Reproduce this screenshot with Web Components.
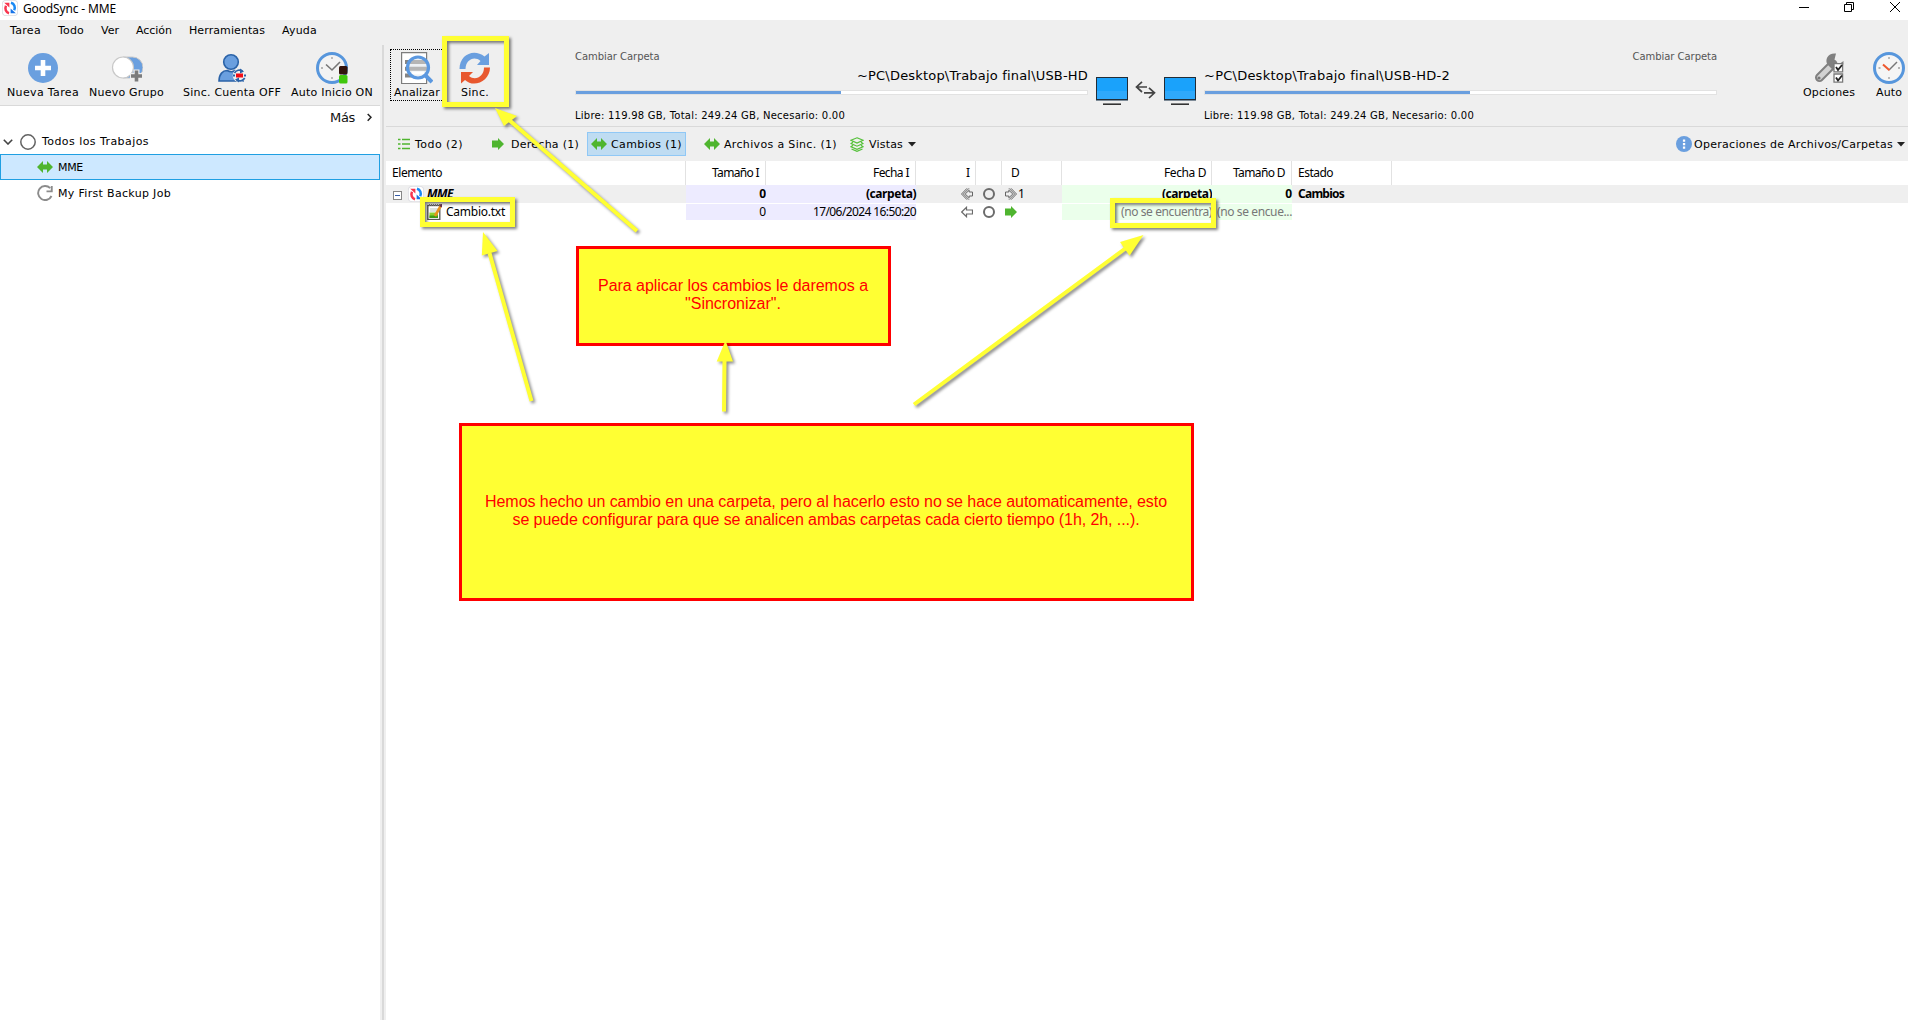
<!DOCTYPE html>
<html lang="es">
<head>
<meta charset="utf-8">
<title>GoodSync - MME</title>
<style>
html,body{margin:0;height:100%;overflow:hidden;background:#fff}
</style>
</head>
<body>
<gs-window></gs-window>
<script>
const UI = '"DejaVu Sans",sans-serif', SEG = '"Noto Sans","Open Sans",sans-serif';

function define(tag, css, html, init) {
  customElements.define(tag, class extends HTMLElement {
    constructor() {
      super();
      this.attachShadow({mode: 'open'});
      const t = document.createElement('template');
      const markup = typeof html === 'function' ? html(this) : html;
      t.innerHTML = '<style>' + css + '</style>' + markup;
      this.shadowRoot.append(t.content.cloneNode(true));
    }
    connectedCallback() { if (init) init(this); }
  });
}

const icons = {
  app: [16, 16, '<rect width="16" height="16" rx="4" fill="#dcdce2"/><rect x=".8" y=".8" width="14.400" height="14.400" rx="3.500" fill="#fff"/><path d="M7 13.200C3.800 12.200 2.600 8.800 4 5.800" fill="none" stroke="#f8354f" stroke-width="2.500"/><path d="M2.200 2.800h5.200v4.600z" fill="#f8354f"/><path d="M9 2.800c3.400 1 4.600 4.400 3.200 7.400" fill="none" stroke="#1889f4" stroke-width="2.500"/><path d="M13.800 13.200H8.600V8.600z" fill="#1673e8"/>'],
  plus: [32, 32, '<circle cx="16" cy="16" r="15" fill="#6a9fdf"/><path d="M16 8v16M8 16h16" stroke="#fff" stroke-width="4.600"/>'],
  group: [32, 32, '<path d="M12 5h9.500a9.500 9.500 0 0 1 0 21H12z" fill="#6a9fdf" stroke="#c9c9c9"/><circle cx="12" cy="15.500" r="10.500" fill="#fff" stroke="#c8c8c8" stroke-width="1.200"/><path d="M25.500 17.500v13M19 24h13" stroke="#efefef" stroke-width="6"/><path d="M25.500 18.500v11M20 24h11" stroke="#7c7c7c" stroke-width="3.600"/>'],
  user: [32, 32, '<circle cx="15" cy="10" r="7.300" fill="#6a9fdf" stroke="#2b63a8" stroke-width="1.600"/><path d="M3 29c0-7 4-10.500 8-10.500 3 1.500 6 1.500 8 0 4 1 7 4 8 10.500z" fill="#6a9fdf" stroke="#2b63a8" stroke-width="1.600"/><circle cx="23.500" cy="23.500" r="6.800" fill="#efefef"/><path d="M18.500 21a5.600 5.600 0 0 1 8-2M28.700 26a5.600 5.600 0 0 1-8 2" fill="none" stroke="#2b63a8" stroke-width="1.700"/><path d="M24 16.500l4 3-4 2zM23 30.500l-4-3 4-2zM17 22.500h2v2h-2zM28 22.500h2v2h-2z" fill="#2b63a8"/><rect x="20" y="21.500" width="7" height="4" fill="#f10d17"/>'],
  clockOn: [32, 32, '<circle cx="16" cy="16" r="14.500" fill="#f3f3f3" stroke="#5796dc" stroke-width="3"/><path d="M16 5v2M16 25v2M5 16h2M25 16h2" stroke="#b5b5b5" stroke-width="1.800"/><path d="M10 12.500l6 5.500 8-8" fill="none" stroke="#777" stroke-width="1.600"/><rect x="23" y="14" width="8.500" height="8.500" rx="1.500" fill="#32140d"/><rect x="23" y="23" width="8.500" height="8.500" rx="1.500" fill="#40c70c"/>'],
  clock: [32, 32, '<circle cx="16" cy="16" r="14.500" fill="#f5f5f5" stroke="#5796dc" stroke-width="3"/><path d="M16 5v2M16 25v2M5.500 16h2M25 16h2" stroke="#b5b5b5" stroke-width="1.800"/><path d="M16 18l8-8" stroke="#777" stroke-width="1.500"/><path d="M10 12.500l6.500 5.700" stroke="#ee582e" stroke-width="2"/>'],
  analyze: [32, 32, '<path d="M.600.600h25v31H.600z" fill="#fff" stroke="#7d7d7d" stroke-width="1.200"/><path d="M4 10h18M4 16.800h18M4 23.500h18" stroke="#858585" stroke-width="4"/><circle cx="17" cy="15.500" r="10.500" fill="#eef1f4"/><path d="M8 10h18M8 16.800h18" stroke="#b5b5b5" stroke-width="4"/><path d="M11 21h12" stroke="#fff" stroke-width="3"/><circle cx="17" cy="15.500" r="10.500" fill="none" stroke="#5b98e0" stroke-width="3.200"/><path d="M24 23l7 7" stroke="#5b98e0" stroke-width="4"/>'],
  sync: [32, 32, '<path d="M.500 17C.500 2.500 15-4 25.500 4.500L30 1v12H18l3.500-4C15 3.500 6.800 8 6.500 17z" fill="#6a9fdf"/><path d="M31 15.500C31 29 15 36.500 6 28L2 31.500V20h12l-4 4c6 5 15 1 15-8.500z" fill="#e8582f"/>'],
  tools: [32, 32, '<path d="M6.500 25.500L20 12" stroke="#808080" stroke-width="9" stroke-linecap="round"/><path d="M6.500 25.500L18 14" stroke="#d2d2d2" stroke-width="5" stroke-linecap="round"/><path d="M23 1.500c-8-1-11.500 6-8.500 11l5.500 5.500c6 2 11-2 10.500-9l-5 3.500-4.500-3z" fill="#808080"/><circle cx="6" cy="26" r="1.600" fill="#777"/><path d="M21 11.600h8.600v8.200H21zM21 22h8.600v8.200H21z" fill="#fff" stroke="#7a7a7a" stroke-width="1.300"/><path d="M23 15l2 3 4-5M23 25.500l2 3 4-5" fill="none" stroke="#222" stroke-width="1.800"/>'],
  both: [16, 12, '<path d="M0 6l6-6v3.500h4V0l6 6-6 6V8.500H6V12z" fill="#4fb52f"/>'],
  right: [12, 12, '<path d="M0 2.600h6V0l6 6-6 6V9.400H0z" fill="#4fb52f"/>'],
  list: [12, 12, '<path d="M0 1.500h2.500M0 6h2.500M0 10.500h2.500M4 1.500h8M4 6h8M4 10.500h8" stroke="#4fb52f" stroke-width="1.400"/>'],
  stack: [14, 15, '<g fill="none" stroke="#55c13a" stroke-width="1.200"><path d="M7 .8l6 2.500-6 2.800-6-2.800zM3 5L1 6.600l6 2.600 6-2.600L11 5M3 8.200L1 9.800l6 2.600 6-2.600-2-1.600M1.500 12L7 14.300 12.500 12"/></g>'],
  dots: [16, 16, '<circle cx="8" cy="8" r="8" fill="#6a9fdf"/><path d="M6.900 3.500h2.300v2.200H6.900zM6.900 7h2.300v2.200H6.900zM6.900 10.500h2.300v2.200H6.900z" fill="#fff"/>'],
  caret: [8, 5, '<path d="M0 0h8L4 4.500z" fill="#222"/>'],
  chevR: [5, 9, '<path d="M.700 1l3.300 3.300L.700 7.800" fill="none" stroke="#222" stroke-width="1.500"/>'],
  chevD: [10, 6, '<path d="M.800.800L5 5 9.200.800" fill="none" stroke="#444" stroke-width="1.600"/>'],
  ring: [16, 16, '<circle cx="8" cy="8" r="7.200" fill="#fff" stroke="#626262" stroke-width="1.500"/>'],
  redo: [16, 16, '<path d="M14.500 11A7 7 0 1 1 13.200 3.200" fill="none" stroke="#8c8c8c" stroke-width="1.900"/><path d="M15.700 1v6.200H9.500V5.500h4.300V1z" fill="#8c8c8c"/>'],
  monitor: [32, 28, '<rect width="32" height="24" fill="#222c36"/><rect x="1" y="1" width="30" height="21" fill="#1aa2fb"/><path d="M1 14h30v8H1z" fill="#2fa9fb"/><path d="M0 23.500h32" stroke="#7f8c98"/><path d="M7 27.200h18" stroke="#333" stroke-width="1.600"/>'],
  swap: [21, 18, '<g fill="none" stroke="#444" stroke-width="1.700"><path d="M7 .800L1.500 6 7 11M1.500 6H12"/><path d="M14 6.800l5.500 5L14 17M19.500 11.800H9"/></g>'],
  minus: [9, 9, '<rect x=".5" y=".5" width="8" height="8" fill="#fff" stroke="#868686"/><path d="M2 4.500h5" stroke="#345ba8"/>'],
  note: [15, 16, '<rect x=".8" y="1.500" width="12" height="14" fill="#fff" stroke="#555" stroke-width="1.300"/><path d="M2 1h11" stroke="#777" stroke-width="2" stroke-dasharray="1 1"/><path d="M3 5h8M3 7h7" stroke="#b9c5b9"/><path d="M2.500 8.500h8.500V14H2.500z" fill="#8dd02c"/><path d="M2.500 11.500h8.500V14H2.500z" fill="#3f9b13"/><path d="M14 1.500L8 12" stroke="#e8921c" stroke-width="2.600"/><path d="M15 .300l-1.500 2.400" stroke="#6b2e4c" stroke-width="2.800"/>'],
  l2: [12, 12, '<path d="M4.200 6L8.200 2.200V4h3.300v4H8.200v1.800zM8 .300L2.400 6 8 11.700M6 .300L.500 6 6 11.700" fill="none" stroke="#666" stroke-width="1"/>'],
  r2: [12, 12, '<path d="M7.800 6L3.800 2.200V4H.500v4h3.300v1.800zM4 .300L9.600 6 4 11.700M6 .300L11.500 6 6 11.700" fill="none" stroke="#666" stroke-width="1"/>'],
  l1: [12, 12, '<path d="M.700 6L5.500 1.300v2.700h6v4h-6v2.700z" fill="#fff" stroke="#6b6b6b" stroke-width="1.200"/>'],
  o: [12, 12, '<circle cx="6" cy="6" r="5" fill="none" stroke="#6b6b6b" stroke-width="2"/>'],
  min: [10, 10, '<path d="M0 5.500h10" stroke="#000"/>'],
  rest: [10, 10, '<path d="M.500 2.500h7v7h-7zM2.500 2.500v-2h7v7h-2" fill="none" stroke="#000"/>'],
  close: [10, 10, '<path d="M0 0l10 10M10 0L0 10" stroke="#000"/>']
};

define('gs-icon', ':host{display:block;flex:none}svg{display:block}', el => {
  const [w, h, body] = icons[el.getAttribute('name')];
  return `<svg width="${w}" height="${h}" viewBox="0 0 ${w} ${h}">${body}</svg>`;
});

define('gs-tool', `:host{display:flex;flex-direction:column;align-items:center;flex:none;padding-top:7px;font:11px/14px ${UI};color:#000}
  .l{display:block;padding-top:2px}`, '<slot name="icon"></slot><div class="l"><slot></slot></div>');

define('gs-titlebar', `:host{display:flex;height:20px;background:#fff;align-items:flex-start;font:12px/16px ${SEG};color:#000}
  gs-icon{margin:7px 0 0}.app{margin:0 0 0 2px}.t{margin:1px auto 0 5px}.w1{margin:2px 0 0}.w2{margin:2px 0 0 35px}.w3{margin:2px 8px 0 36px}`,
  `<gs-icon class="app" name="app"></gs-icon><ui-text class="t" w="93">GoodSync - MME</ui-text>
   <gs-icon class="w1" name="min"></gs-icon><gs-icon class="w2" name="rest"></gs-icon><gs-icon class="w3" name="close"></gs-icon>`);

define('gs-menubar', `:host{display:flex;gap:17px;height:25px;padding:1px 0 0 10px;background:#efefef;box-sizing:border-box;font:11px/20px ${UI};color:#000}`,
  `<ui-text w="31">Tarea</ui-text><ui-text w="26">Todo</ui-text><ui-text w="18">Ver</ui-text><ui-text w="36">Acción</ui-text><ui-text w="76">Herramientas</ui-text><ui-text w="35">Ayuda</ui-text>`);

define('gs-job', `:host{display:flex;align-items:center;height:26px;box-sizing:border-box;padding-left:37px;gap:5px;font:11px/14px ${UI};color:#000}
  :host([root]){padding-left:3px;gap:7px;height:25px}
  :host([selected]){background:#cde8ff;border:1px solid #1f9fe2;padding-left:36px}
  .l{padding-top:1px}:host([root]) .l{margin-left:-1px}`, '<slot name="icon"></slot><div class="l"><slot></slot></div>');

define('gs-sidebar', `:host{display:flex;flex-direction:column;width:380px;flex:none;background:#fff}
  .tools{display:flex;height:60px;background:#efefef;border-bottom:1px solid #d9d9d9;padding-left:7px}
  .more{display:flex;justify-content:flex-end;align-items:center;gap:12px;height:23px;padding-right:8px;font:13px/16px ${UI};color:#111}
  .tree{display:flex;flex-direction:column}`,
  `<div class="tools">
     <gs-tool><gs-icon slot="icon" name="plus"></gs-icon><ui-text w="72">Nueva Tarea</ui-text></gs-tool>
     <gs-tool style="margin-left:10px"><gs-icon slot="icon" name="group"></gs-icon><ui-text w="75">Nuevo Grupo</ui-text></gs-tool>
     <gs-tool style="margin-left:19px"><gs-icon slot="icon" name="user"></gs-icon><ui-text w="98">Sinc. Cuenta OFF</ui-text></gs-tool>
     <gs-tool style="margin-left:10px"><gs-icon slot="icon" name="clockOn"></gs-icon><ui-text w="82">Auto Inicio ON</ui-text></gs-tool>
   </div>
   <div class="more"><ui-text w="25">Más</ui-text><gs-icon name="chevR"></gs-icon></div>
   <div class="tree">
     <gs-job root><gs-icon slot="icon" name="chevD"></gs-icon><gs-icon slot="icon" name="ring"></gs-icon><ui-text w="107">Todos los Trabajos</ui-text></gs-job>
     <gs-job selected><gs-icon slot="icon" name="both"></gs-icon><ui-text w="25">MME</ui-text></gs-job>
     <gs-job><gs-icon slot="icon" name="redo"></gs-icon><ui-text w="113">My First Backup Job</ui-text></gs-job>
   </div>`);

define('gs-splitter', `:host{display:flex;width:6px;flex:none;background:#efefef}i{width:2px;margin-left:2px;background:#d9d9d9}`, '<i></i>');

define('gs-folder', `:host{display:flex;flex-direction:column;width:513px;flex:none;font:10px/14px ${UI};color:#000}
  .ch{color:#555;padding-top:5px;height:17px}.path{font-size:13px;line-height:18px;height:23px}
  .left{align-self:flex-start}.right{align-self:flex-end}
  .bar{height:3px;border:1px solid #e2e2e2;background:#fff}.bar i{display:block;width:265px;height:3px;background:#6a9fdf}
  .free{margin-top:14px}`,
  el => {
    const r = el.hasAttribute('remote');
    return `<div class="ch ${r ? 'right' : 'left'}"><ui-text w="84.5">Cambiar Carpeta</ui-text></div>
    <div class="path ${r ? 'left' : 'right'}"><ui-text w="${r ? 246 : 231}">${r ? '~PC\\Desktop\\Trabajo final\\USB-HD-2' : '~PC\\Desktop\\Trabajo final\\USB-HD'}</ui-text></div>
    <div class="bar"><i></i></div><div class="free"><ui-text w="270">Libre: 119.98 GB, Total: 249.24 GB, Necesario: 0.00</ui-text></div>`;
  });

define('gs-header', `:host{display:flex;height:81px;background:#efefef;border-bottom:1px solid #d9d9d9}
  .an{display:flex;border:1px dotted #000;border-right:0;margin:4px 0 0 4px;width:50px;height:50px;padding-left:3px}
  .an gs-tool{padding-top:2px}.links{display:flex;gap:7px;margin:32px 8px 0 8px}.links .s{margin:4px 0 0}`,
  `<div class="an"><gs-tool><gs-icon slot="icon" name="analyze"></gs-icon><ui-text w="46">Analizar</ui-text></gs-tool></div>
   <gs-tool style="margin-left:15px"><gs-icon slot="icon" name="sync"></gs-icon><ui-text w="28">Sinc.</ui-text></gs-tool>
   <gs-folder style="margin-left:84px"></gs-folder>
   <div class="links"><gs-icon name="monitor"></gs-icon><gs-icon class="s" name="swap"></gs-icon><gs-icon name="monitor" style="margin-left:1px"></gs-icon></div>
   <gs-folder remote></gs-folder>
   <gs-tool style="margin-left:auto"><gs-icon slot="icon" name="tools"></gs-icon><ui-text w="52">Opciones</ui-text></gs-tool>
   <gs-tool style="margin:0 3px 0 18px"><gs-icon slot="icon" name="clock"></gs-icon><ui-text w="26">Auto</ui-text></gs-tool>`);

define('gs-filter', `:host{display:flex;align-items:center;gap:5px;height:24px;box-sizing:border-box;flex:none;font:11px/14px ${UI};color:#000}
  :host([active]){background:#bfdcf2;border:1px solid #90c8f6;padding:0 3px}
  .l{padding-top:2px}`, '<slot name="icon"></slot><div class="l"><slot></slot></div><slot name="end"></slot>');

define('gs-filterbar', `:host{display:flex;height:34px;background:#efefef;padding:5px 3px 0 12px;box-sizing:border-box}`,
  `<gs-filter><gs-icon slot="icon" name="list"></gs-icon><ui-text w="48">Todo (2)</ui-text></gs-filter>
   <gs-filter style="margin-left:29px;gap:7px"><gs-icon slot="icon" name="right"></gs-icon><ui-text w="68">Derecha (1)</ui-text></gs-filter>
   <gs-filter active style="margin-left:8px;gap:4px"><gs-icon slot="icon" name="both"></gs-icon><ui-text w="71">Cambios (1)</ui-text></gs-filter>
   <gs-filter style="margin-left:18px;gap:4px"><gs-icon slot="icon" name="both"></gs-icon><ui-text w="113">Archivos a Sinc. (1)</ui-text></gs-filter>
   <gs-filter style="margin-left:13px"><gs-icon slot="icon" name="stack"></gs-icon><ui-text w="34">Vistas</ui-text><gs-icon slot="end" name="caret"></gs-icon></gs-filter>
   <gs-filter style="margin-left:auto;gap:2px"><gs-icon slot="icon" name="dots"></gs-icon><ui-text w="199">Operaciones de Archivos/Carpetas</ui-text><gs-icon slot="end" name="caret" style="margin-left:2px"></gs-icon></gs-filter>`);

define('gs-grid', `:host{display:flex;flex-direction:column;font:12px/16px ${SEG};color:#000}
  .r{display:grid;grid-template-columns:300px 80px 150px 60px 26px 60px 150px 80px 100px 1fr;height:18px}
  .r>div{display:flex;align-items:center;min-width:0}
  .e{justify-content:flex-end}
  .h{height:24px}.h>div:not(:last-child){border-right:1px solid #e2e2e2}
  .h>.e{padding-right:6px}.h>div:first-child{padding-left:6px}
  ui-text,b{display:block}b{font-weight:inherit}
  .f{background:#efefef;font-weight:700}
  .v{background:#edebff}.g{background:#ebffeb}
  .d>.v,.d>.g{margin:1px 0}.d>.g{color:#777}
  .a{justify-content:flex-end;padding-right:3px}.c{justify-content:center}.b{padding-left:3px;gap:2px;font-weight:400}
  .s{padding-left:6px}`,
  `<div class="r h"><div><ui-text w="50">Elemento</ui-text></div><div class="e"><ui-text w="47">Tamaño I</ui-text></div><div class="e"><ui-text w="36">Fecha I</ui-text></div><div class="e" style="padding-right:5px"><b>I</b></div><div></div><div style="padding-left:9px"><b>D</b></div><div class="e" style="padding-right:5px"><ui-text w="42">Fecha D</ui-text></div><div class="e"><ui-text w="52">Tamaño D</ui-text></div><div class="s"><ui-text w="35">Estado</ui-text></div><div></div></div>
   <div class="r f"><div style="padding-left:7px"><gs-icon name="minus" style="margin-top:3px"></gs-icon><gs-icon name="app" style="margin-left:6px"></gs-icon><ui-text w="26" style="margin-left:3px;font-style:italic">MME</ui-text></div><div class="v e"><b>0</b></div><div class="v e"><ui-text w="50">(carpeta)</ui-text></div><div class="a"><gs-icon name="l2"></gs-icon></div><div class="c"><gs-icon name="o"></gs-icon></div><div class="b"><gs-icon name="r2"></gs-icon><b style="margin-left:-1px">1</b></div><div class="g e"><ui-text w="50">(carpeta)</ui-text></div><div class="g e"><b>0</b></div><div class="s"><ui-text w="46">Cambios</ui-text></div><div></div></div>
   <div class="r d"><div style="padding-left:41px"><gs-icon name="note"></gs-icon><ui-text w="59" style="margin-left:4px">Cambio.txt</ui-text></div><div class="v e"><b>0</b></div><div class="v e"><ui-text w="103">17/06/2024 16:50:20</ui-text></div><div class="a"><gs-icon name="l1"></gs-icon></div><div class="c"><gs-icon name="o"></gs-icon></div><div class="b"><gs-icon name="right"></gs-icon></div><div class="g e"><ui-text w="91">(no se encuentra)</ui-text></div><div class="g e"><ui-text w="75">(no se encue...</ui-text></div><div></div><div></div></div>`);

define('gs-note', `:host{position:absolute;display:flex;flex-direction:column;align-items:center;box-sizing:border-box;background:#ff3;border:3px solid #f00;color:#f00;font:16px/18px "Liberation Sans",Arial,sans-serif}`, '<slot></slot>');

define('gs-mark', `:host{position:absolute;box-sizing:border-box;border:5px solid #ff3;filter:drop-shadow(2px 2px 1.500px rgba(0,0,0,.5))}`, '');

/* The annotation layer floats over the whole application window. */
define('gs-annotations', `:host{position:absolute;inset:0;pointer-events:none}svg{position:absolute;inset:0;filter:drop-shadow(2px 2px 1.500px rgba(0,0,0,.45))}`,
  `<gs-note style="left:576px;top:246px;width:315px;height:100px;padding:28px 1px 0 0"><ui-text w="270">Para aplicar los cambios le daremos a</ui-text><ui-text w="96">"Sincronizar".</ui-text></gs-note>
   <gs-note style="left:459px;top:423px;width:735px;height:178px;padding:67px 1px 0 0"><ui-text w="682">Hemos hecho un cambio en una carpeta, pero al hacerlo esto no se hace automaticamente, esto</ui-text><ui-text w="627">se puede configurar para que se analicen ambas carpetas cada cierto tiempo (1h, 2h, ...).</ui-text></gs-note>
   <gs-mark style="left:442px;top:36px;width:67px;height:71px"></gs-mark>
   <gs-mark style="left:420px;top:197px;width:95px;height:30px"></gs-mark>
   <gs-mark style="left:1110px;top:198px;width:106px;height:30px"></gs-mark>
   <svg width="1908" height="1020" fill="#ff3" stroke="#ff3" stroke-width="4">
     <path d="M508 119L637 231M489.500 253L531.500 401M724.500 360L724 411.500M1126 248L914 404.500"/>
     <g stroke="none"><path d="M495 108l22 8-13 10z"/><path d="M483 232l14.500 19-15.700 4.500z"/><path d="M725.500 340.500l7.500 21h-16.300z"/><path d="M1143.500 235l-23.500 7 9.500 13.700z"/></g>
   </svg>`);

define('gs-window', `:host{position:relative;display:flex;flex-direction:column;width:1908px;height:1020px;overflow:hidden;background:#fff}
  .body{display:flex;flex:1}.main{display:flex;flex-direction:column;flex:1;min-width:0}`,
  `<gs-titlebar></gs-titlebar><gs-menubar></gs-menubar>
   <div class="body"><gs-sidebar></gs-sidebar><gs-splitter></gs-splitter>
     <div class="main"><gs-header></gs-header><gs-filterbar></gs-filterbar><gs-grid></gs-grid></div></div>
   <gs-annotations></gs-annotations>`);

/* One-line label set to a fixed advance width through letter spacing. */
const pen = document.createElement('canvas').getContext('2d');
define('ui-text', ':host{display:block;white-space:nowrap;flex:none}', '<slot></slot>', el => {
  const w = +el.getAttribute('w'), cs = getComputedStyle(el), s = el.textContent;
  pen.font = `${cs.fontStyle} ${cs.fontWeight} ${cs.fontSize} ${cs.fontFamily}`;
  el.style.width = w + 'px';
  el.style.letterSpacing = ((w - pen.measureText(s).width) / s.length).toFixed(3) + 'px';
});
</script>
</body>
</html>
